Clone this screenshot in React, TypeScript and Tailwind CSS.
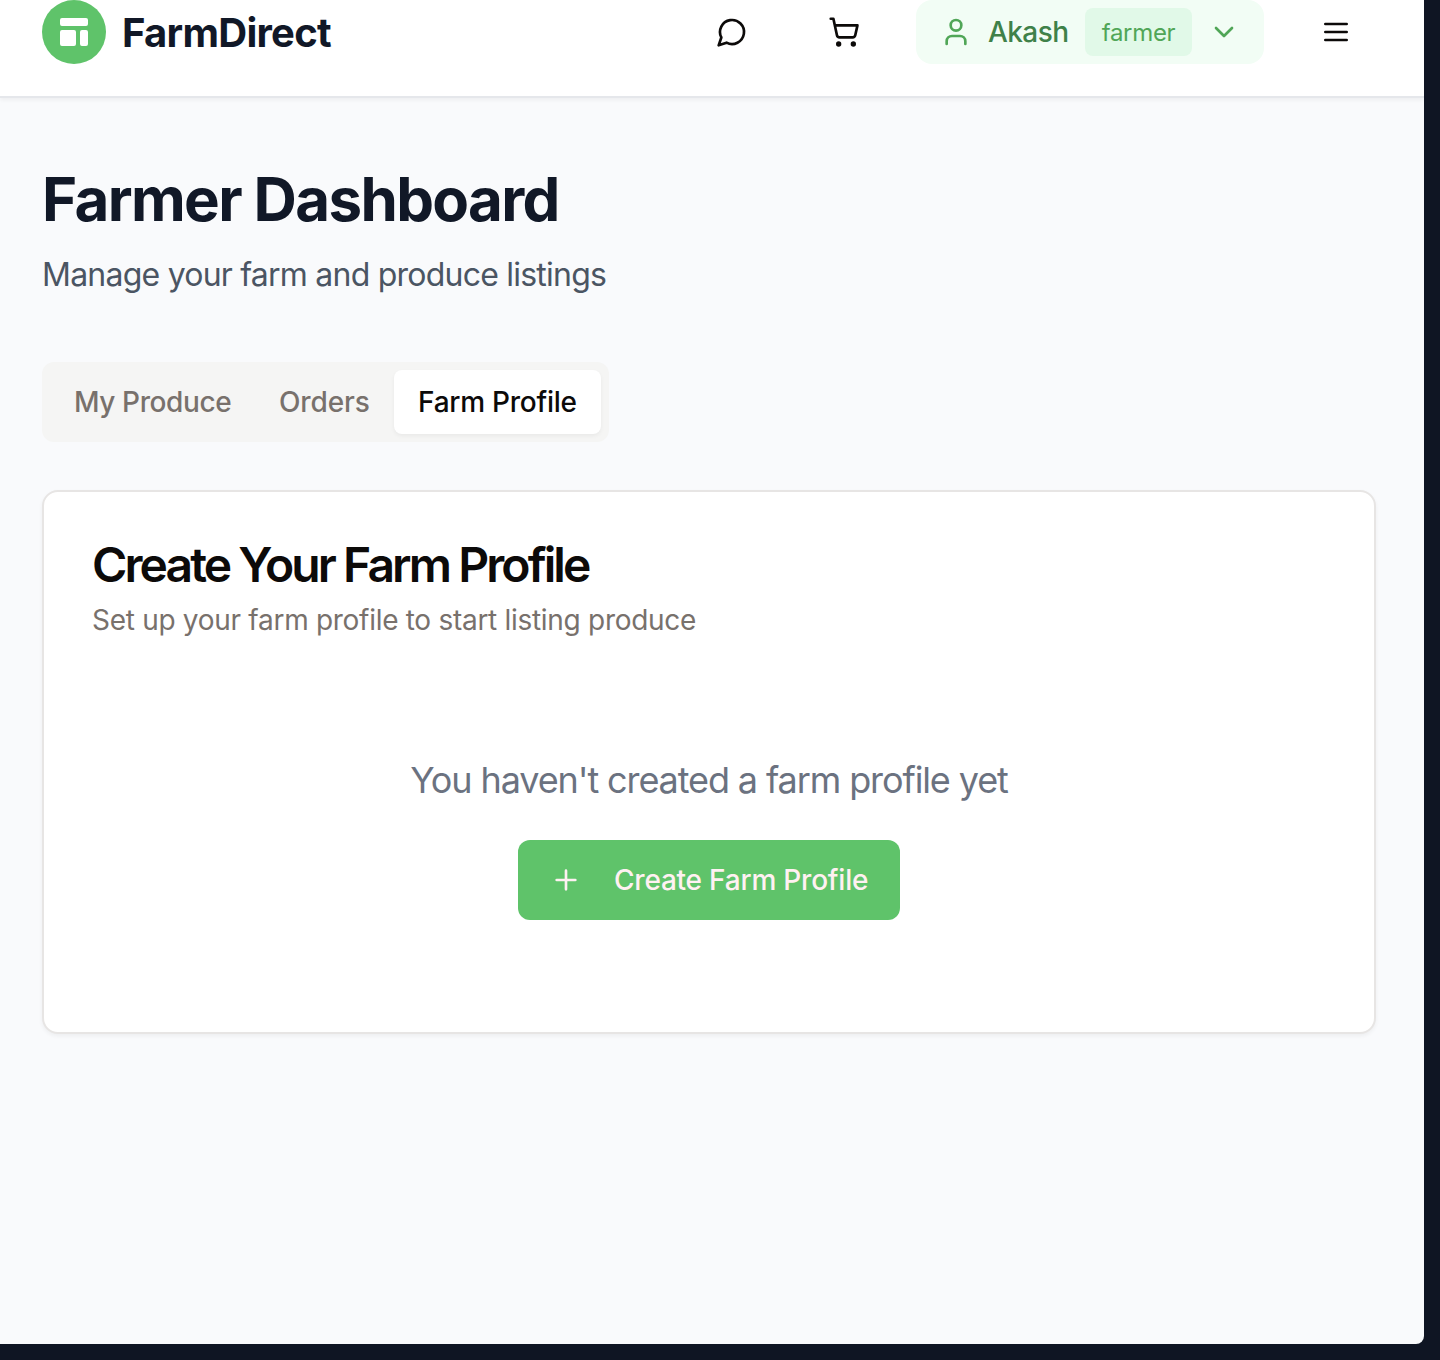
import type { ReactNode } from 'react';

function Icon({ children }: { children: ReactNode }) {
  return (
    <svg
      className="size-8 shrink-0"
      viewBox="0 0 24 24"
      fill="none"
      stroke="currentColor"
      strokeWidth="2"
      strokeLinecap="round"
      strokeLinejoin="round"
    >
      {children}
    </svg>
  );
}

function Header() {
  return (
    <header className="flex h-[98px] items-start justify-between border-b-2 border-[#e5e7eb] bg-white pr-12 pl-[42px] shadow-[0_2px_4px_0_rgba(0,0,0,0.05)]">
      <div className="flex h-16 items-center gap-4">
        <div className="flex size-16 items-center justify-center rounded-full bg-[#5fc36a]">
          <svg className="size-10 text-white" viewBox="0 0 20 20" fill="currentColor">
            <path d="M3 4a1 1 0 011-1h12a1 1 0 011 1v2a1 1 0 01-1 1H4a1 1 0 01-1-1V4zM3 10a1 1 0 011-1h6a1 1 0 011 1v6a1 1 0 01-1 1H4a1 1 0 01-1-1v-6zM14 9a1 1 0 00-1 1v6a1 1 0 001 1h2a1 1 0 001-1v-6a1 1 0 00-1-1h-2z" />
          </svg>
        </div>
        <span className="pt-px text-[40px] leading-[56px] font-bold tracking-[-0.725px] text-[#111827]">FarmDirect</span>
      </div>
      <div className="flex h-16 items-center gap-8 text-[#0c0a09]">
        <button className="flex h-16 w-20 items-center justify-center">
          <Icon>
            <path d="M7.9 20A9 9 0 1 0 4 16.1L2 22Z" />
          </Icon>
        </button>
        <button className="flex h-16 w-20 items-center justify-center">
          <Icon>
            <circle cx="8" cy="21" r="1" />
            <circle cx="19" cy="21" r="1" />
            <path d="M2.05 2.05h2l2.66 12.42a2 2 0 0 0 2 1.58h9.78a2 2 0 0 0 1.95-1.57l1.65-7.43H5.12" />
          </Icon>
        </button>
        <button className="flex h-16 w-[348px] items-center rounded-2xl bg-[#f2fdf5] px-6 text-[#50a657]">
          <Icon>
            <path d="M19 21v-2a4 4 0 0 0-4-4H9a4 4 0 0 0-4 4v2" />
            <circle cx="12" cy="7" r="4" />
          </Icon>
          <span className="ml-4 w-[81px] text-left text-[28px] leading-10 font-medium tracking-[-0.572px] text-[#3f8149]">Akash</span>
          <span className="ml-4 flex h-12 w-[107px] items-center justify-center rounded-lg bg-[#e1f9e8] pt-0.5 text-2xl tracking-[-0.3px]">farmer</span>
          <span className="ml-4">
            <Icon>
              <path d="m6 9 6 6 6-6" />
            </Icon>
          </span>
        </button>
        <button className="flex h-16 w-20 items-center justify-center">
          <Icon>
            <path d="M4 6h16M4 12h16M4 18h16" />
          </Icon>
        </button>
      </div>
    </header>
  );
}

function Tabs() {
  return (
    <div className="flex h-20 w-[567px] items-center rounded-xl bg-[#f5f5f4] p-2 text-[28px] leading-10 font-medium whitespace-nowrap text-[#78716c]">
      <button className="h-16 w-[205px] pl-6 text-left tracking-[-0.4px]">My Produce</button>
      <button className="h-16 w-[139px] pl-6 text-left tracking-[-0.1px]">Orders</button>
      <button className="h-16 w-[207px] rounded-lg bg-white pl-6 text-left tracking-[-0.254px] text-[#0c0a09] shadow-[0_2px_4px_0_rgba(0,0,0,0.05)]">
        Farm Profile
      </button>
    </div>
  );
}

function ProfileCard() {
  return (
    <section className="mt-12 rounded-2xl border-2 border-[#e7e5e4] bg-white p-12 shadow-[0_2px_4px_0_rgba(0,0,0,0.05)]">
      <h2 className="pt-px text-5xl leading-[48px] font-semibold tracking-[-2.911px] text-[#0c0a09]">Create Your Farm Profile</h2>
      <p className="mt-[11px] text-[28px] leading-10 tracking-[-0.29px] text-[#78716c]">
        Set up your farm profile to start listing produce
      </p>
      <div className="flex flex-col items-center pt-28 pb-16">
        <p className="mb-8 text-4xl leading-[56px] tracking-[-1.11px] text-[#6b7280]">You haven't created a farm profile yet</p>
        <button className="flex h-20 w-[382px] items-center gap-8 rounded-xl bg-[#5fc36a] pl-8 text-[28px] leading-10 font-medium tracking-[-0.217px] whitespace-nowrap text-[#fff1f2]">
          <Icon>
            <path d="M5 12h14M12 5v14" />
          </Icon>
          Create Farm Profile
        </button>
      </div>
    </section>
  );
}

export default function App() {
  return (
    <div className="h-[1360px] w-[1440px] overflow-hidden bg-[#0f1523] pr-4 pb-4 font-['Inter',sans-serif]">
      <div className="h-full overflow-hidden rounded-br-lg bg-[#f9fafc]">
        <Header />
        <main className="pt-[65px] pr-12 pl-[42px]">
          <h1 className="text-6xl leading-[72px] font-bold tracking-[-1.64px] text-[#111827]">Farmer Dashboard</h1>
          <p className="mt-4 mb-[63px] text-[32px] leading-[48px] tracking-[-0.772px] text-[#4b5563]">
            Manage your farm and produce listings
          </p>
          <Tabs />
          <ProfileCard />
        </main>
      </div>
    </div>
  );
}
